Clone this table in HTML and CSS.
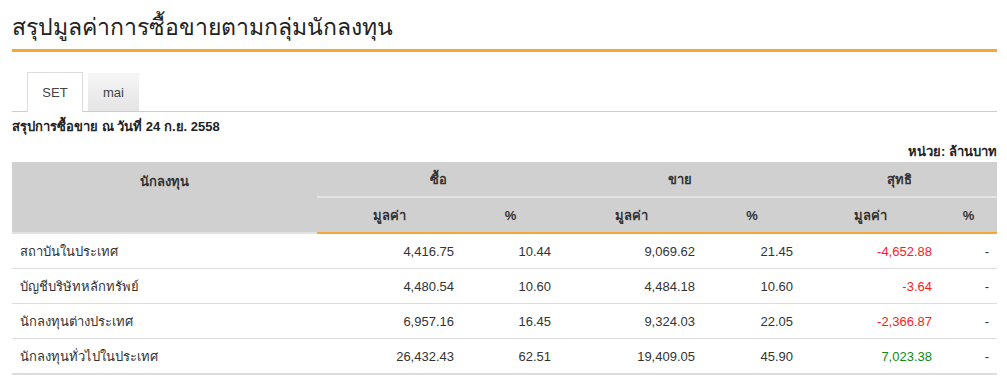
FILE: index.html
```html
<!DOCTYPE html>
<html lang="th">
<head>
<meta charset="utf-8">
<title>สรุปมูลค่าการซื้อขายตามกลุ่มนักลงทุน</title>
<link rel="stylesheet" href="styles.css">
</head>
<body>
<div class="page">
  <h1 class="title">สรุปมูลค่าการซื้อขายตามกลุ่มนักลงทุน</h1>
  <div class="tabs">
    <div class="tab active">SET</div>
    <div class="tab">mai</div>
  </div>
  <div class="date">สรุปการซื้อขาย ณ วันที่ 24 ก.ย. 2558</div>
  <div class="unit">หน่วย: ล้านบาท</div>
  <table class="grid">
    <colgroup>
      <col class="c-name">
      <col class="c-val">
      <col class="c-pct">
      <col class="c-val2">
      <col class="c-pct2">
      <col class="c-val3">
      <col class="c-pct3">
    </colgroup>
    <thead>
      <tr>
        <th rowspan="2" class="h-name">นักลงทุน</th>
        <th colspan="2" class="h-grp">ซื้อ</th>
        <th colspan="2" class="h-grp">ขาย</th>
        <th colspan="2" class="h-grp">สุทธิ</th>
      </tr>
      <tr>
        <th class="h-sub">มูลค่า</th>
        <th class="h-sub">%</th>
        <th class="h-sub">มูลค่า</th>
        <th class="h-sub">%</th>
        <th class="h-sub">มูลค่า</th>
        <th class="h-sub">%</th>
      </tr>
    </thead>
    <tbody>
      <tr>
        <td class="name">สถาบันในประเทศ</td>
        <td class="num">4,416.75</td>
        <td class="num">10.44</td>
        <td class="num">9,069.62</td>
        <td class="num">21.45</td>
        <td class="num neg">-4,652.88</td>
        <td class="num">-</td>
      </tr>
      <tr>
        <td class="name">บัญชีบริษัทหลักทรัพย์</td>
        <td class="num">4,480.54</td>
        <td class="num">10.60</td>
        <td class="num">4,484.18</td>
        <td class="num">10.60</td>
        <td class="num neg">-3.64</td>
        <td class="num">-</td>
      </tr>
      <tr>
        <td class="name">นักลงทุนต่างประเทศ</td>
        <td class="num">6,957.16</td>
        <td class="num">16.45</td>
        <td class="num">9,324.03</td>
        <td class="num">22.05</td>
        <td class="num neg">-2,366.87</td>
        <td class="num">-</td>
      </tr>
      <tr class="last">
        <td class="name">นักลงทุนทั่วไปในประเทศ</td>
        <td class="num">26,432.43</td>
        <td class="num">62.51</td>
        <td class="num">19,409.05</td>
        <td class="num">45.90</td>
        <td class="num pos">7,023.38</td>
        <td class="num">-</td>
      </tr>
    </tbody>
  </table>
</div>
</body>
</html>
```

FILE: styles.css
```css
html, body {
  margin: 0;
  padding: 0;
  background: #ffffff;
}

body {
  font-family: "Liberation Sans", "Noto Sans", "DejaVu Sans", sans-serif;
  font-size: 13px;
  color: #333333;
}

.page {
  width: 985px;
  padding: 0 10px 0 12px;
}

.title {
  margin: 0;
  height: 37px;
  padding-top: 12px;
  font-size: 23px;
  font-weight: normal;
  line-height: 30px;
  color: #222222;
  border-bottom: 3px solid #f6a832;
}

.tabs {
  display: flex;
  align-items: flex-end;
  gap: 5px;
  margin-top: 20px;
  padding-left: 15px;
  border-bottom: 1px solid #cccccc;
  height: 39px;
}

.tab {
  box-sizing: border-box;
  height: 38px;
  width: 51px;
  display: flex;
  align-items: center;
  justify-content: center;
  font-size: 13px;
  color: #444444;
  background: linear-gradient(#f6f6f6, #e4e4e4);
}

.tab.active {
  width: 56px;
  height: 40px;
  margin-bottom: -1px;
  background: #ffffff;
  border: 1px solid #dddddd;
  border-bottom: none;
}

.date {
  margin-top: 7px;
  font-weight: bold;
  font-size: 13px;
  line-height: 16px;
  color: #222222;
}

.unit {
  margin-top: 10px;
  text-align: right;
  font-weight: bold;
  font-size: 13px;
  line-height: 14px;
  color: #222222;
}

.grid {
  margin-top: 3px;
  width: 985px;
  table-layout: fixed;
  border-collapse: collapse;
}

.c-name { width: 305px; }
.c-val { width: 145px; }
.c-pct { width: 97px; }
.c-val2 { width: 144px; }
.c-pct2 { width: 98px; }
.c-val3 { width: 139px; }
.c-pct3 { width: 57px; }

.grid th {
  background: #d0d0d0;
  font-weight: bold;
  font-size: 13px;
  color: #333333;
  text-align: center;
  padding: 0;
}

.h-name {
  vertical-align: top;
  padding-top: 9px !important;
  height: 25px;
  border-bottom: 2px solid #e2e2e2;
}

.h-grp {
  height: 34px;
  border-bottom: 2px solid #e4e4e4;
}

.h-sub {
  height: 34px;
  border-bottom: 2px solid #f6a832;
}

.grid td {
  height: 34px;
  padding: 0 8px;
  border-bottom: 1px solid #dddddd;
  vertical-align: middle;
  color: #333333;
}

.grid tr.last td {
  border-bottom: 2px solid #dddddd;
}

.grid td.name {
  text-align: left;
}

.grid td.num {
  text-align: right;
}

.grid td.neg {
  color: #ff1a1a;
}

.grid td.pos {
  color: #118a11;
}
```
